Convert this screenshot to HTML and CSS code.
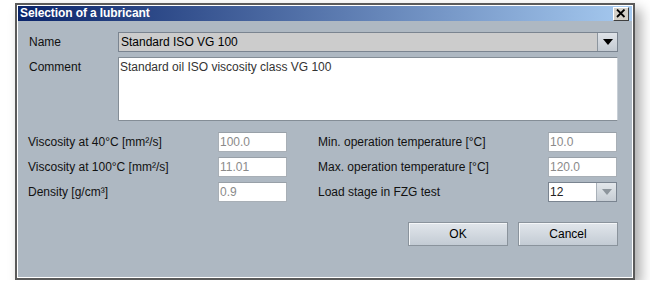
FILE: index.html
```html
<!DOCTYPE html>
<html>
<head>
<meta charset="utf-8">
<link rel="stylesheet" href="styles.css">
</head>
<body>
<div class="window">
  <div class="titlebar">
    <span class="title">Selection of a lubricant</span>
    <span class="close"><svg width="10" height="9" viewBox="0 0 10 9"><path d="M1 0.5 L8.5 8 M8.5 0.5 L1 8" stroke="#000" stroke-width="1.8" fill="none"/></svg></span>
  </div>
  <div class="content">
    <div class="top-grid">
      <div class="label">Name</div>
      <div class="combo">
        <span class="combo-text">Standard ISO VG 100</span>
        <span class="combo-btn"><svg width="10" height="6" viewBox="0 0 10 6"><path d="M0 0 H10 L5 6 Z" fill="#000"/></svg></span>
      </div>
      <div class="label label-top">Comment</div>
      <div class="textarea">Standard oil ISO viscosity class VG 100</div>
    </div>
    <div class="params">
      <div class="pgrid pgrid-left">
        <div class="plabel">Viscosity at 40°C [mm²/s]</div><div class="field">100.0</div>
        <div class="plabel">Viscosity at 100°C [mm²/s]</div><div class="field">11.01</div>
        <div class="plabel">Density [g/cm³]</div><div class="field">0.9</div>
      </div>
      <div class="pgrid pgrid-right">
        <div class="plabel">Min. operation temperature [°C]</div><div class="field">10.0</div>
        <div class="plabel">Max. operation temperature [°C]</div><div class="field">120.0</div>
        <div class="plabel">Load stage in FZG test</div>
        <div class="small-combo">
          <span class="small-text">12</span>
          <span class="small-btn"><svg width="10" height="6" viewBox="0 0 10 6"><path d="M0 0 H10 L5 6 Z" fill="#8d959c"/></svg></span>
        </div>
      </div>
    </div>
    <div class="buttons">
      <div class="btn">OK</div>
      <div class="btn">Cancel</div>
    </div>
  </div>
</div>
</body>
</html>
```

FILE: styles.css
```css
html, body {
  margin: 0;
  padding: 0;
  background: #ffffff;
}
body {
  font-family: "Liberation Sans", Arial, sans-serif;
  font-size: 12px;
  color: #111;
}
.window {
  box-sizing: border-box;
  margin: 3px 0 0 15px;
  width: 620px;
  height: 277px;
  border: 2px solid #5a5a5a;
  padding: 1px;
  background: #aeb8c2;
  box-shadow: inset 0 0 0 1px #ffffff, 6px 6px 12px rgba(0, 0, 0, 0.33);
  display: flex;
  flex-direction: column;
}
.titlebar {
  height: 15px;
  background: linear-gradient(to right, #0a246a, #a6caf0);
  display: flex;
  align-items: center;
  justify-content: space-between;
  padding: 0 3px 0 2px;
}
.title {
  color: #ffffff;
  font-weight: bold;
  font-size: 12px;
  line-height: 15px;
  letter-spacing: -0.1px;
}
.close {
  box-sizing: border-box;
  width: 16px;
  height: 14px;
  background: #d4d0c8;
  border: 1px solid;
  border-color: #ffffff #404040 #404040 #ffffff;
  display: flex;
  align-items: center;
  justify-content: center;
}
.content {
  padding: 11px 14px 0 10px;
}
.top-grid {
  display: grid;
  grid-template-columns: 90px 1fr;
  grid-template-rows: 20px 64px;
  row-gap: 5px;
}
.label {
  line-height: 20px;
  padding-left: 1px;
}
.label-top {
  line-height: 14px;
  padding-top: 3px;
}
.combo {
  box-sizing: border-box;
  display: flex;
  border: 1px solid #7a8490;
  background: #cccccc;
}
.combo-text {
  flex: 1;
  line-height: 18px;
  padding-left: 2px;
  color: #000;
}
.combo-btn {
  box-sizing: border-box;
  width: 20px;
  border-left: 1px solid #8c959e;
  background: linear-gradient(#dfe3e8, #c3cad2);
  display: flex;
  align-items: center;
  justify-content: center;
}
.textarea {
  box-sizing: border-box;
  background: #ffffff;
  border: 1px solid #848d96;
  border-right-color: #c8cfd6;
  padding: 2px 1px;
  line-height: 14px;
  color: #333;
}
.params {
  display: flex;
  gap: 31px;
  margin-top: 11px;
}
.pgrid {
  display: grid;
  grid-auto-rows: 20px;
  row-gap: 5px;
}
.pgrid-left {
  grid-template-columns: 190px 69px;
}
.pgrid-right {
  grid-template-columns: 230px 69px;
}
.plabel {
  line-height: 20px;
  white-space: nowrap;
}
.field {
  box-sizing: border-box;
  background: #ffffff;
  border: 1px solid #a8afb6;
  border-top-color: #98a0a8;
  line-height: 18px;
  padding-left: 1px;
  color: #8a8a8a;
}
.small-combo {
  box-sizing: border-box;
  display: flex;
  border: 1px solid #7a8490;
  background: #ffffff;
}
.small-text {
  flex: 1;
  line-height: 18px;
  padding-left: 1px;
  color: #222;
}
.small-btn {
  box-sizing: border-box;
  width: 20px;
  border-left: 1px solid #a9b1b9;
  background: linear-gradient(#e3e7eb, #c6cdd4);
  display: flex;
  align-items: center;
  justify-content: center;
}
.buttons {
  display: flex;
  justify-content: flex-end;
  gap: 10px;
  margin-top: 20px;
}
.btn {
  box-sizing: border-box;
  width: 100px;
  height: 24px;
  border: 1px solid #8a939c;
  box-shadow: inset 1px 1px 0 #f4f6f8;
  background: linear-gradient(#e1e6eb, #c3cbd4);
  text-align: center;
  line-height: 22px;
  color: #000;
}
```
